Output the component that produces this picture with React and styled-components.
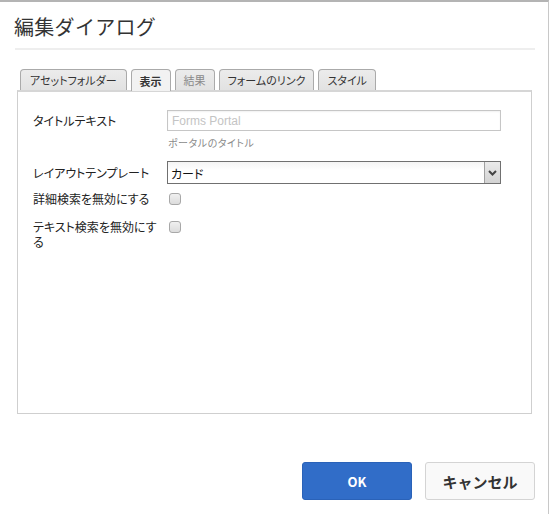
import styled, { createGlobalStyle } from 'styled-components'

const Global = createGlobalStyle`
  html, body { margin: 0; padding: 0; background: #fff; }
  body { font-family: "Noto Sans CJK JP", "Noto Sans", sans-serif; color: #333; }
`

const Dialog = styled.div`
  box-sizing: border-box;
  width: 549px;
  height: 514px;
  border-top: 2px solid #b4b4b4;
  border-right: 1px solid #c8c8c8;
  display: flex;
  flex-direction: column;
`

const Header = styled.div`
  margin: 0 13px 0 15px;
  height: 46px;
  border-bottom: 2px solid #eeeeee;
  display: flex;
  align-items: center;
`

const Title = styled.h1`
  margin: 0 0 0 -1px;
  font-size: 20px;
  font-weight: 400;
  color: #333;
  letter-spacing: 0.3px;
  line-height: 1;
  padding-top: 4px;
`

const Body = styled.div`
  padding: 19px 16px 0 17px;
`

const Tabs = styled.div`
  display: flex;
  gap: 4px;
  padding-left: 3px;
  height: 21px;
  align-items: flex-end;
`

const Tab = styled.div`
  box-sizing: border-box;
  height: ${p => (p.$active ? '22px' : '21px')};
  margin-bottom: ${p => (p.$active ? '-1px' : '0')};
  padding: 0 ${p => p.$pad || 8}px;
  border: 1px solid #aaa;
  border-bottom: none;
  border-radius: 4px 4px 0 0;
  background: ${p => (p.$active ? '#f2f2f2' : 'linear-gradient(#ececec, #e2e2e2)')};
  font-size: 11px;
  font-feature-settings: "palt";
  font-weight: ${p => (p.$active ? 700 : 400)};
  color: ${p => (p.$dim ? '#8a8a8a' : '#333')};
  display: flex;
  align-items: center;
  position: relative;
  z-index: ${p => (p.$active ? 2 : 1)};
`

const Panel = styled.div`
  box-sizing: border-box;
  height: 324px;
  border: 1px solid #cfcfcf;
  border-top: 2px solid #d6d6d6;
  padding: 18px 30px 0 15px;
`

const Row = styled.div`
  display: flex;
  align-items: flex-start;
  margin-top: ${p => p.$mt || 0}px;
  margin-bottom: ${p => p.$mb || 0}px;
`

const Label = styled.div`
  width: 128px;
  margin-right: 6px;
  font-size: 12px;
  font-feature-settings: "palt";
  color: #222;
  line-height: 15px;
  padding-top: ${p => p.$pt || 0}px;
  flex-shrink: 0;
`

const Field = styled.div`
  flex: 1;
  display: flex;
  flex-direction: column;
`

const TextInput = styled.div`
  box-sizing: border-box;
  height: 21px;
  border: 1px solid #c6c6c6;
  box-shadow: inset 0 1px 2px rgba(0, 0, 0, 0.06);
  font-family: "Liberation Sans", Arial, sans-serif;
  font-size: 12px;
  color: #c4c4c4;
  padding: 3px 4px;
`

const Help = styled.div`
  font-size: 10px;
  font-feature-settings: "palt";
  letter-spacing: 0.5px;
  color: #8a8a8a;
  margin-top: 4px;
  padding-left: 1px;
`

const Select = styled.div`
  box-sizing: border-box;
  height: 23px;
  border: 1px solid #707070;
  display: flex;
  align-items: stretch;
  font-size: 12px;
  font-feature-settings: "palt";
  color: #111;
`

const SelectValue = styled.div`
  flex: 1;
  padding: 3px 3px;
  background: linear-gradient(#f4f4f4, #fff 40%);
`

const SelectArrow = styled.div`
  width: 15px;
  border-left: 1px solid #a0a0a0;
  background: linear-gradient(#eaeaea, #d3d3d3);
  display: flex;
  align-items: center;
  justify-content: center;
`

const Check = styled.div`
  box-sizing: border-box;
  width: 12px;
  height: 12px;
  border: 1px solid #a8a8a8;
  border-radius: 3px;
  background: linear-gradient(#f0f0f0, #dcdcdc);
  margin-top: ${p => p.$mt || 0}px;
  margin-left: 2px;
`

const Footer = styled.div`
  flex: 1;
  display: flex;
  justify-content: flex-end;
  align-items: flex-end;
  gap: 13px;
  padding: 0 13px 14px 0;
`

const Button = styled.button`
  box-sizing: border-box;
  width: 110px;
  height: 38px;
  border-radius: 3px;
  font-family: "Noto Sans CJK JP", "Noto Sans", sans-serif;
  font-size: ${p => (p.$primary ? 13 : 15)}px;
  font-weight: 700;
  border: 1px solid ${p => (p.$primary ? '#2a62b8' : '#d4d4d4')};
  background: ${p => (p.$primary ? '#316dc8' : '#f9f9f9')};
  color: ${p => (p.$primary ? '#fff' : '#333')};
  padding: 0;
`

export default function App() {
  return (
    <>
      <Global />
      <Dialog>
        <Header>
          <Title>編集ダイアログ</Title>
        </Header>
        <Body>
          <Tabs>
            <Tab $pad={9}>アセットフォルダー</Tab>
            <Tab $active>表示</Tab>
            <Tab $dim>結果</Tab>
            <Tab>フォームのリンク</Tab>
            <Tab>スタイル</Tab>
          </Tabs>
          <Panel>
            <Row>
              <Label $pt={3}>タイトルテキスト</Label>
              <Field>
                <TextInput>Forms Portal</TextInput>
                <Help>ポータルのタイトル</Help>
              </Field>
            </Row>
            <Row $mt={11} $mb={7}>
              <Label $pt={4}>レイアウトテンプレート</Label>
              <Field>
                <Select>
                  <SelectValue>カード</SelectValue>
                  <SelectArrow>
                    <svg width="9" height="6" viewBox="0 0 9 6">
                      <path d="M1 1 L4.5 4.5 L8 1" stroke="#444" strokeWidth="2" fill="none" />
                    </svg>
                  </SelectArrow>
                </Select>
              </Field>
            </Row>
            <Row $mb={13}>
              <Label>詳細検索を無効にする</Label>
              <Check $mt={2} />
            </Row>
            <Row>
              <Label>テキスト検索を無効にする</Label>
              <Check $mt={2} />
            </Row>
          </Panel>
        </Body>
        <Footer>
          <Button $primary>OK</Button>
          <Button>キャンセル</Button>
        </Footer>
      </Dialog>
    </>
  )
}
